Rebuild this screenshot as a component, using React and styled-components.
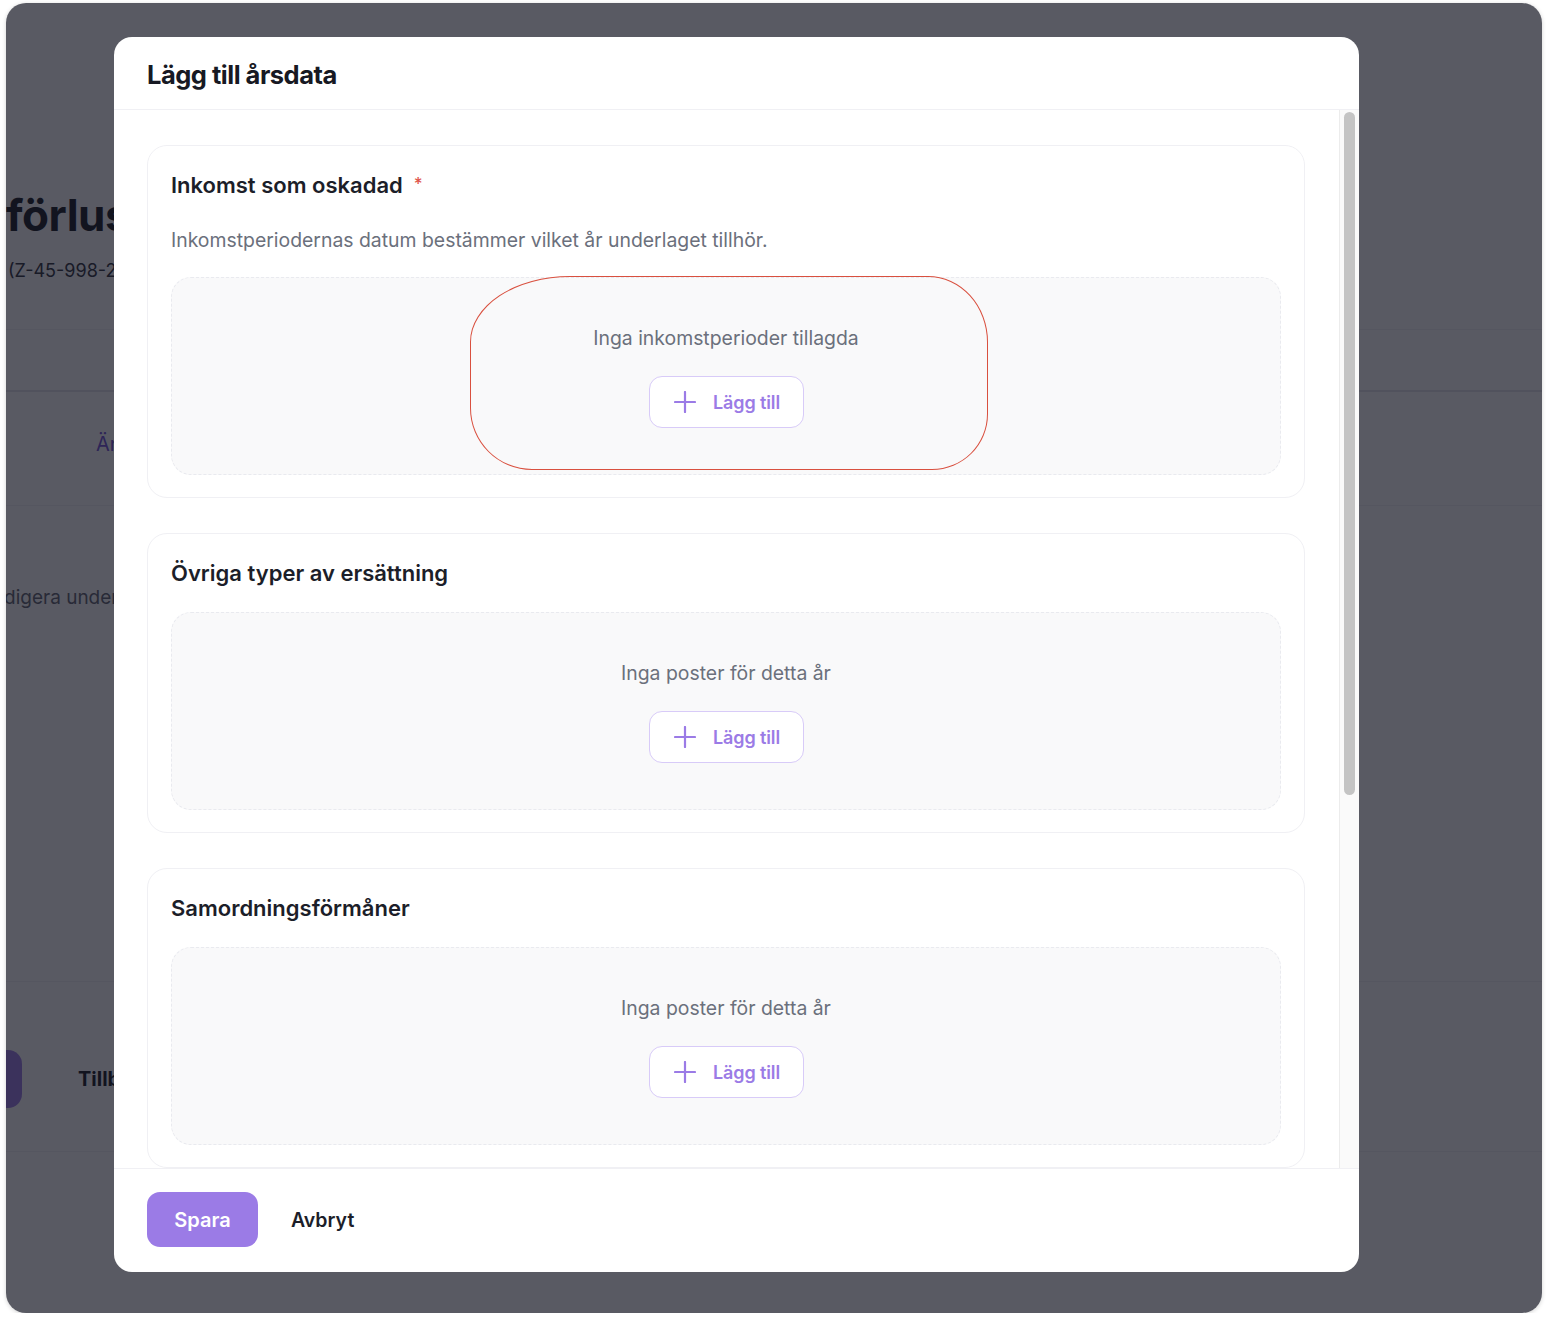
import React from 'react';
import styled, { createGlobalStyle } from 'styled-components';

const GlobalStyle = createGlobalStyle`
  html, body {
    margin: 0;
    background: #ffffff;
    font-family: Inter, 'Noto Sans', 'Liberation Sans', sans-serif;
    -webkit-font-smoothing: antialiased;
  }
  * { box-sizing: border-box; }
`;

/* the window behind the dialog */
const Frame = styled.div`
  position: relative;
  margin: 3px 6px 0;
  width: 1536px;
  height: 1310px;
  border-radius: 20px;
  overflow: hidden;
  background: #ffffff;
  box-shadow: 0 1px 4px rgba(0, 0, 0, 0.18);
`;

const Page = styled.div`
  display: flex;
  flex-direction: column;
  height: 100%;
  color: #12141c;
`;

const PageHeader = styled.header`
  height: 327px;
  padding-top: 186px;
  border-bottom: 1px solid #f2f2f5;
  h1 {
    margin: 0;
    font-size: 44px;
    line-height: 52px;
    font-weight: 700;
    letter-spacing: -0.5px;
  }
  p {
    margin: 17px 0 0 2px;
    font-size: 18px;
    line-height: 26px;
    color: #2a2c36;
  }
`;

const Tabs = styled.nav`
  height: 62px;
  border-bottom: 2px solid #e4e4ea;
`;

const LinkRow = styled.div`
  height: 114px;
  padding: 40px 0 0 90px;
  border-bottom: 1px solid #f2f2f5;
  font-size: 20px;
  color: #6e4fd6;
`;

const Note = styled.div`
  padding: 80px 0 0;
  margin-left: -25px;
  font-size: 19px;
  color: #5d606c;
  height: 476px;
  border-bottom: 1px solid #f2f2f5;
`;

const ActionBar = styled.div`
  display: flex;
  align-items: center;
  gap: 56px;
  padding-top: 24px;
  height: 170px;
  border-bottom: 1px solid #f2f2f5;
  font-size: 20px;
  font-weight: 700;
`;

const PagePrimary = styled.div`
  width: 140px;
  height: 58px;
  margin-left: -124px;
  border-radius: 14px;
  background: #9b7be6;
`;

const Overlay = styled.div`
  position: absolute;
  inset: 0;
  background: rgba(18, 20, 33, 0.7);
  display: flex;
  align-items: flex-start;
  padding: 34px 0 0 108px;
`;

const Modal = styled.div`
  width: 1245px;
  height: 1235px;
  background: #ffffff;
  border-radius: 18px;
  display: flex;
  flex-direction: column;
  overflow: hidden;
`;

const ModalHeader = styled.div`
  height: 73px;
  flex: none;
  display: flex;
  align-items: center;
  padding: 3px 33px 0;
  border-bottom: 1px solid #f0f0f4;
  h2 {
    margin: 0;
    font-size: 25.5px;
    font-weight: 700;
    letter-spacing: -0.5px;
    color: #171923;
  }
`;

const ModalBody = styled.div`
  flex: 1;
  min-height: 0;
  display: flex;
`;

const ScrollArea = styled.div`
  flex: 1;
  overflow-y: auto;
  scrollbar-width: none;
  padding: 35px 34px 35px 33px;
  display: flex;
  flex-direction: column;
  gap: 35px;
  &::-webkit-scrollbar {
    display: none;
  }
`;

const ScrollRail = styled.div`
  flex: none;
  width: 20px;
  background: #fafafa;
  border-left: 1px solid #ececec;
  padding: 2px 4px 0 4px;
`;

const ScrollThumb = styled.div`
  height: 683px;
  border-radius: 6px;
  background: #c4c4c4;
`;

const Card = styled.section`
  flex: none;
  border: 1px solid #f0f0f4;
  border-radius: 20px;
  padding: 22px 23px 22px;
  display: flex;
  flex-direction: column;
  gap: 22px;
`;

const CardTitle = styled.h3`
  margin: 0;
  font-size: 22px;
  line-height: 34px;
  font-weight: 600;
  color: #1c1e29;
  display: flex;
  align-items: flex-start;
  gap: 11px;
`;

const Required = styled.span`
  color: #e0564c;
  font-size: 17px;
  line-height: 33px;
  font-weight: 500;
`;

const CardHint = styled.p`
  margin: 1px 0 0;
  font-size: 19.4px;
  line-height: 30px;
  color: #6b707c;
`;

const EmptyBox = styled.div`
  position: relative;
  height: ${(p) => p.$height || 198}px;
  background: #f9f9fa;
  border: 1px dashed #e9eaef;
  border-radius: 20px;
  display: flex;
  flex-direction: column;
  align-items: center;
  padding-top: 47px;
  gap: 25px;
`;

const EmptyText = styled.div`
  font-size: 19.4px;
  line-height: 26px;
  color: #6b707c;
`;

const AddButton = styled.button`
  width: 155px;
  height: 52px;
  display: flex;
  align-items: center;
  justify-content: center;
  gap: 17px;
  padding: 0 0 0 2px;
  background: #ffffff;
  border: 1.5px solid #d8cbf8;
  border-radius: 13px;
  font-family: inherit;
  font-size: 18px;
  font-weight: 600;
  letter-spacing: -0.1px;
  color: #9b7be6;
  cursor: pointer;
`;

/* red hand-drawn highlight over the first empty state */
const Highlight = styled.div`
  position: absolute;
  left: 298px;
  top: -2px;
  width: 518px;
  height: 194px;
  border: 1.5px solid #d9503f;
  border-radius: 100px 60px 56px 62px / 66px 66px 56px 62px;
  pointer-events: none;
`;

const ModalFooter = styled.div`
  height: 104px;
  flex: none;
  border-top: 1px solid #f0f0f4;
  display: flex;
  align-items: center;
  padding: 0 33px 2px;
  gap: 33px;
`;

const PrimaryButton = styled.button`
  width: 111px;
  height: 55px;
  border: none;
  border-radius: 13px;
  background: #9b7be6;
  color: #ffffff;
  font-family: inherit;
  font-size: 20px;
  font-weight: 600;
  cursor: pointer;
`;

const TextButton = styled.button`
  border: none;
  background: none;
  padding: 0;
  font-family: inherit;
  font-size: 19.5px;
  font-weight: 600;
  color: #1c1e29;
  cursor: pointer;
`;

function PlusIcon() {
  return (
    <svg width="22" height="22" viewBox="0 0 22 22" fill="none">
      <path d="M11 1v20M1 11h20" stroke="currentColor" strokeWidth="2.2" strokeLinecap="round" />
    </svg>
  );
}

function EmptyState({ text, children, height }) {
  return (
    <EmptyBox $height={height}>
      <EmptyText>{text}</EmptyText>
      <AddButton type="button">
        <PlusIcon />
        Lägg till
      </AddButton>
      {children}
    </EmptyBox>
  );
}

export default function App() {
  return (
    <>
      <GlobalStyle />
      <Frame>
        <Page>
          <PageHeader>
            <h1>förlust</h1>
            <p>(Z-45-998-2023)</p>
          </PageHeader>
          <Tabs />
          <LinkRow>Ändra</LinkRow>
          <Note>Redigera underlaget</Note>
          <ActionBar>
            <PagePrimary />
            <span>Tillbaka</span>
          </ActionBar>
        </Page>

        <Overlay>
          <Modal>
            <ModalHeader>
              <h2>Lägg till årsdata</h2>
            </ModalHeader>
            <ModalBody>
              <ScrollArea>
                <Card>
                  <CardTitle>
                    Inkomst som oskadad <Required>*</Required>
                  </CardTitle>
                  <CardHint>Inkomstperiodernas datum bestämmer vilket år underlaget tillhör.</CardHint>
                  <EmptyState text="Inga inkomstperioder tillagda">
                    <Highlight />
                  </EmptyState>
                </Card>
                <Card>
                  <CardTitle>Övriga typer av ersättning</CardTitle>
                  <EmptyState text="Inga poster för detta år" />
                </Card>
                <Card>
                  <CardTitle>Samordningsförmåner</CardTitle>
                  <EmptyState text="Inga poster för detta år" />
                </Card>
                <Card>
                  <CardTitle>Avdrag</CardTitle>
                  <EmptyState text="Inga poster för detta år" />
                </Card>
              </ScrollArea>
              <ScrollRail>
                <ScrollThumb />
              </ScrollRail>
            </ModalBody>
            <ModalFooter>
              <PrimaryButton type="button">Spara</PrimaryButton>
              <TextButton type="button">Avbryt</TextButton>
            </ModalFooter>
          </Modal>
        </Overlay>
      </Frame>
    </>
  );
}
